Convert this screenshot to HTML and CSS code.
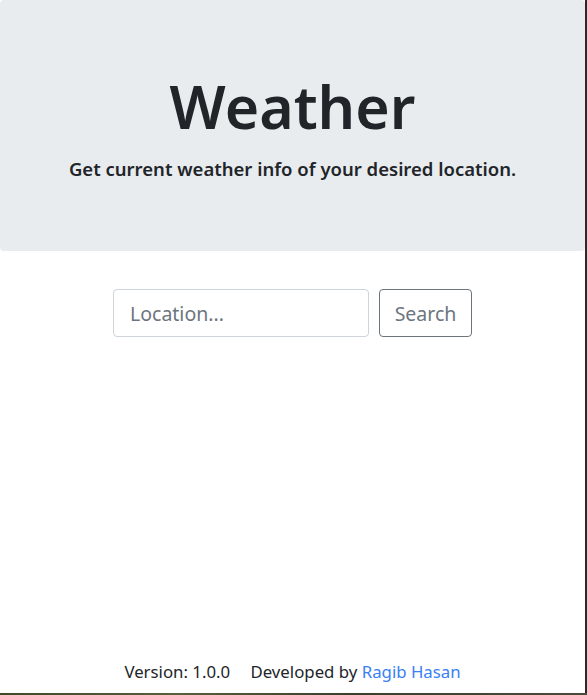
FILE: index.html
```html
<!DOCTYPE html>
<html lang="en">
<head>
<meta charset="utf-8">
<title>Weather</title>
<link rel="stylesheet" href="styles.css">
</head>
<body>
<div class="page">
  <header class="jumbotron">
    <h1 class="title">Weather</h1>
    <p class="lead">Get current weather info of your desired location.</p>
  </header>
  <form class="search">
    <input class="location" type="text" placeholder="Location...">
    <button class="btn" type="button">Search</button>
  </form>
  <footer class="footer">
    <span class="version">Version: 1.0.0</span>
    <span class="credit">Developed by <a href="#" class="author">Ragib Hasan</a></span>
  </footer>
</div>
</body>
</html>
```
FILE: styles.css
```css
html, body {
  margin: 0;
  padding: 0;
  height: 100%;
}
html {
  background: linear-gradient(90deg, #3d4a2a, #5a5e3a 30%, #3a3f2c 60%, #4b4a3a);
}
body {
  font-family: "Noto Sans", "Open Sans", sans-serif;
  color: #212529;
  overflow: hidden;
}
.page {
  width: 585px;
  height: 693px;
  background: #fff;
  display: flex;
  flex-direction: column;
  border-right: 2px solid #2a2a2a;
}
.jumbotron {
  background: #e9ecef;
  border-radius: 4px;
  height: 251px;
  box-sizing: border-box;
  padding-top: 69px;
  text-align: center;
}
.title {
  margin: 0;
  font-size: 59px;
  font-weight: 600;
  line-height: 74px;
  letter-spacing: 0;
}
.lead {
  margin: 13px 0 0;
  font-size: 18.5px;
  font-weight: 600;
  line-height: 26px;
}
.search {
  display: flex;
  justify-content: center;
  gap: 10px;
  margin-top: 38px;
}
.location {
  width: 256px;
  height: 48px;
  box-sizing: border-box;
  border: 1px solid #ced4da;
  border-radius: 4px;
  padding: 8px 16px;
  font-family: inherit;
  font-size: 19.5px;
  color: #495057;
  outline: none;
}
.location::placeholder {
  color: #6c757d;
}
.btn {
  width: 93px;
  height: 48px;
  box-sizing: border-box;
  border: 1px solid #6c757d;
  border-radius: 4px;
  background: #fff;
  color: #6c757d;
  font-family: inherit;
  font-size: 19.5px;
  padding: 0;
}
.footer {
  margin-top: auto;
  padding-bottom: 9px;
  text-align: center;
  font-size: 16.8px;
  line-height: 24px;
}
.version {
  margin-right: 16px;
}
.author {
  color: #3a80f6;
  text-decoration: none;
}
```
